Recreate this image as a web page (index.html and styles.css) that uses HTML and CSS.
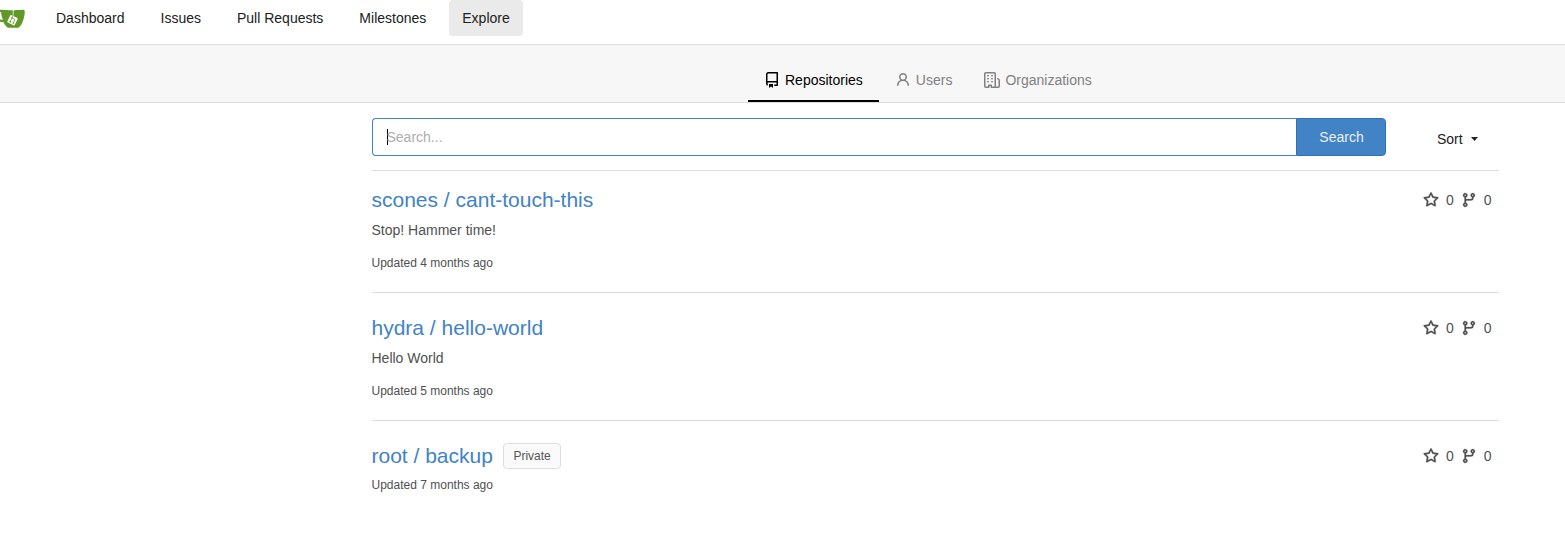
FILE: index.html
```html
<!DOCTYPE html>
<html lang="en">
<head>
<meta charset="utf-8">
<title>Explore</title>
<link rel="stylesheet" href="styles.css">
</head>
<body>
<svg class="sprite" aria-hidden="true">
  <symbol id="star" viewBox="0 0 16 16"><path fill-rule="evenodd" d="M8 .25a.75.75 0 0 1 .673.418l1.882 3.815 4.21.612a.75.75 0 0 1 .416 1.279l-3.046 2.97.719 4.192a.75.75 0 0 1-1.088.791L8 12.347l-3.766 1.98a.75.75 0 0 1-1.088-.79l.72-4.194L.818 6.374a.75.75 0 0 1 .416-1.28l4.21-.611L7.327.668A.75.75 0 0 1 8 .25zm0 2.445L6.615 5.5a.75.75 0 0 1-.564.41l-3.097.45 2.24 2.184a.75.75 0 0 1 .216.664l-.528 3.084 2.769-1.456a.75.75 0 0 1 .698 0l2.77 1.456-.53-3.084a.75.75 0 0 1 .216-.664l2.24-2.183-3.096-.45a.75.75 0 0 1-.564-.41L8 2.694z"/></symbol>
  <symbol id="branch" viewBox="0 0 16 16"><path fill-rule="evenodd" d="M11.75 2.5a.75.75 0 1 0 0 1.5.75.75 0 0 0 0-1.5zm-2.25.75a2.25 2.25 0 1 1 3 2.122V6A2.5 2.5 0 0 1 10 8.5H6a1 1 0 0 0-1 1v1.128a2.251 2.251 0 1 1-1.5 0V5.372a2.25 2.25 0 1 1 1.5 0v1.836A2.492 2.492 0 0 1 6 7h4a1 1 0 0 0 1-1v-.628A2.25 2.25 0 0 1 9.5 3.25zM4.25 12a.75.75 0 1 0 0 1.5.75.75 0 0 0 0-1.5zM3.5 3.25a.75.75 0 1 1 1.5 0 .75.75 0 0 1-1.5 0z"/></symbol>
</svg>
<nav class="navbar">
  <svg class="logo" viewBox="0 0 640 640"><path fill="#fff" d="m395.9 484.2-126.9-61c-12.5-6-17.9-21.2-11.8-33.8l61-126.9c6-12.5 21.2-17.9 33.8-11.8 17.2 8.3 27.1 13 27.1 13l-.1-109.2 16.7-.1.1 117.1s57.4 24.2 83.1 40.1c3.7 2.3 10.2 6.8 12.9 14.4 2.1 6.1 2 13.1-1 19.3l-61 126.9c-6.2 12.7-21.4 18.1-33.9 12z"/><path fill="#609926" d="M622.7 149.8c-4.1-4.1-9.6-4-9.6-4s-117.2 6.6-177.9 8c-13.3.3-26.5.6-39.6.7v117.2c-5.5-2.6-11.1-5.3-16.6-7.9 0-36.4-.1-109.2-.1-109.2-29 .4-89.2-2.2-89.2-2.2s-141.4-7.1-156.8-8.5c-9.8-.6-22.5-2.1-39 1.5-8.7 1.8-33.5 7.4-53.8 26.9C-4.9 212.4 6.6 276.2 8 285.8c1.7 11.7 6.9 44.2 31.7 72.5 45.8 56.1 144.4 54.8 144.4 54.8s12.1 28.9 30.6 55.5c25 33.1 50.7 58.9 75.7 62 63 0 188.9-.1 188.9-.1s12 .1 28.3-10.3c14-8.5 26.5-23.4 26.5-23.4S547 483 565 451.5c5.5-9.7 10.1-19.1 14.1-28 0 0 55.2-117.1 55.2-231.1-1.1-34.5-9.6-40.6-11.6-42.6zM125.6 353.9c-25.9-8.5-36.9-18.7-36.9-18.7S69.6 321.8 60 295.4c-16.5-44.2-1.4-71.2-1.4-71.2s8.4-22.5 38.5-30c13.8-3.7 31-3.1 31-3.1s7.1 59.4 15.7 94.2c7.2 29.2 24.8 77.7 24.8 77.7s-26.1-3.1-43-9.1zm300.3 107.6s-6.1 14.5-19.6 15.4c-5.8.4-10.3-1.2-10.3-1.2s-.3-.1-5.3-2.1l-112.9-55s-10.9-5.7-12.8-15.6c-2.2-8.1 2.7-18.1 2.7-18.1L322 273s4.8-9.7 12.2-13c.6-.3 2.3-1 4.5-1.5 8.1-2.1 18 2.8 18 2.8l110.7 53.7s12.6 5.7 15.3 16.2c1.9 7.4-.5 14-1.8 17.2-6.3 15.4-55 113.1-55 113.1z"/><path fill="#609926" d="M326.8 380.1c-8.2.1-15.4 5.8-17.3 13.8-1.9 8 2 16.3 9.1 20 7.7 4 17.5 1.8 22.7-5.4 5.1-7.1 4.3-16.9-1.8-23.1l24-49.1c1.5.1 3.7.2 6.2-.5 4.1-.9 7.1-3.6 7.1-3.6 4.2 1.8 8.6 3.8 13.2 6.1 4.8 2.4 9.3 4.9 13.4 7.3.9.5 1.8 1.1 2.8 1.9 1.6 1.3 3.4 3.1 4.7 5.5 1.9 5.5-1.9 14.9-1.9 14.9-2.3 7.6-18.4 40.6-18.4 40.6-8.1-.2-15.3 5-17.7 12.5-2.6 8.1 1.1 17.3 8.9 21.3 7.8 4 17.4 1.7 22.5-5.3 5-6.8 4.6-16.3-1.1-22.6 1.9-3.7 3.7-7.4 5.6-11.3 5-10.4 13.5-30.4 13.5-30.4.9-1.7 5.7-10.3 2.7-21.3-2.5-11.4-12.6-16.7-12.6-16.7-12.2-7.9-29.2-15.2-29.2-15.2s0-4.1-1.1-7.1c-1.1-3.1-2.8-5.1-3.9-6.3 4.7-9.7 9.4-19.3 14.1-29-4.1-2-8.1-4-12.2-6.1-4.8 9.8-9.7 19.7-14.5 29.5-6.7-.1-12.9 3.5-16.1 9.4-3.4 6.3-2.7 14.1 1.9 19.8z"/></svg>
  <a class="nav-item">Dashboard</a>
  <a class="nav-item">Issues</a>
  <a class="nav-item">Pull Requests</a>
  <a class="nav-item">Milestones</a>
  <a class="nav-item active">Explore</a>
</nav>
<div class="tabs">
  <a class="tab active"><svg class="icon" viewBox="0 0 16 16"><path fill-rule="evenodd" d="M2 2.5A2.5 2.5 0 0 1 4.5 0h8.75a.75.75 0 0 1 .75.75v12.5a.75.75 0 0 1-.75.75h-2.5a.75.75 0 1 1 0-1.5h1.75v-2h-8a1 1 0 0 0-.714 1.7.75.75 0 0 1-1.072 1.05A2.495 2.495 0 0 1 2 11.5v-9zm10.5-1V9h-8c-.356 0-.694.074-1 .208V2.5a1 1 0 0 1 1-1h8zM5 12.25v3.25a.25.25 0 0 0 .4.2l1.45-1.087a.25.25 0 0 1 .3 0L8.6 15.7a.25.25 0 0 0 .4-.2v-3.25a.25.25 0 0 0-.25-.25h-3.5a.25.25 0 0 0-.25.25z"/></svg>Repositories</a>
  <a class="tab"><svg class="icon" viewBox="0 0 16 16"><path fill-rule="evenodd" d="M10.5 5a2.5 2.5 0 1 1-5 0 2.5 2.5 0 0 1 5 0zm.061 3.073a4 4 0 1 0-5.123 0 6.004 6.004 0 0 0-3.431 5.142.75.75 0 0 0 1.498.07 4.5 4.5 0 0 1 8.99 0 .75.75 0 1 0 1.498-.07 6.005 6.005 0 0 0-3.432-5.142z"/></svg>Users</a>
  <a class="tab"><svg class="icon" viewBox="0 0 16 16"><path fill-rule="evenodd" d="M1.5 14.25c0 .138.112.25.25.25H4v-1.25a.75.75 0 0 1 .75-.75h2.5a.75.75 0 0 1 .75.75v1.25h2.25a.25.25 0 0 0 .25-.25V1.75a.25.25 0 0 0-.25-.25h-8.5a.25.25 0 0 0-.25.25v12.5zM1.75 16A1.75 1.75 0 0 1 0 14.25V1.75C0 .784.784 0 1.75 0h8.5C11.216 0 12 .784 12 1.75v12.5c0 .085-.006.168-.018.25h2.268a.25.25 0 0 0 .25-.25V8.285a.25.25 0 0 0-.111-.208l-1.055-.703a.75.75 0 1 1 .832-1.248l1.055.703c.487.325.779.871.779 1.456v5.965A1.75 1.75 0 0 1 14.25 16h-3.5a.75.75 0 0 1-.197-.026c-.099.017-.2.026-.303.026h-3a.75.75 0 0 1-.75-.75V14h-1v1.25a.75.75 0 0 1-.75.75h-3zM3 3.75A.75.75 0 0 1 3.75 3h.5a.75.75 0 0 1 0 1.5h-.5A.75.75 0 0 1 3 3.75zM3.75 6a.75.75 0 0 0 0 1.5h.5a.75.75 0 0 0 0-1.5h-.5zM3 9.75A.75.75 0 0 1 3.75 9h.5a.75.75 0 0 1 0 1.5h-.5A.75.75 0 0 1 3 9.75zM7.75 9a.75.75 0 0 0 0 1.5h.5a.75.75 0 0 0 0-1.5h-.5zM7 6.75A.75.75 0 0 1 7.75 6h.5a.75.75 0 0 1 0 1.5h-.5A.75.75 0 0 1 7 6.75zM7.75 3a.75.75 0 0 0 0 1.5h.5a.75.75 0 0 0 0-1.5h-.5z"/></svg>Organizations</a>
</div>
<main class="content">
  <div class="toolbar">
    <div class="search-box"><span class="caret"></span>Search...</div>
    <button class="search-button">Search</button>
    <div class="sort">Sort <svg class="arrow" viewBox="0 0 7 4"><path d="M0 0h7L3.5 4z"/></svg></div>
  </div>
  <section class="repo">
    <div class="repo-head"><a class="repo-name">scones / cant-touch-this</a>
      <div class="stats"><svg class="icon"><use href="#star"/></svg><span>0</span><svg class="icon"><use href="#branch"/></svg><span>0</span></div></div>
    <p class="desc">Stop! Hammer time!</p>
    <p class="updated">Updated 4 months ago</p>
  </section>
  <section class="repo">
    <div class="repo-head"><a class="repo-name">hydra / hello-world</a>
      <div class="stats"><svg class="icon"><use href="#star"/></svg><span>0</span><svg class="icon"><use href="#branch"/></svg><span>0</span></div></div>
    <p class="desc">Hello World</p>
    <p class="updated">Updated 5 months ago</p>
  </section>
  <section class="repo">
    <div class="repo-head"><a class="repo-name">root / backup</a><span class="label">Private</span>
      <div class="stats"><svg class="icon"><use href="#star"/></svg><span>0</span><svg class="icon"><use href="#branch"/></svg><span>0</span></div></div>
    <p class="updated">Updated 7 months ago</p>
  </section>
</main>
</body>
</html>
```
FILE: styles.css
```css
* { box-sizing: border-box; }
body {
  margin: 0;
  background: #fff;
  color: #212121;
  font: 14px/20px "Liberation Sans", Arial, sans-serif;
  overflow: hidden;
}
.sprite { display: none; }
.icon { width: 16px; height: 16px; fill: currentColor; flex: none; }
.stats .icon { stroke: currentColor; stroke-width: .25; }

.navbar {
  display: flex;
  align-items: flex-start;
  gap: 10px;
  height: 45px;
  border-bottom: 1px solid #dedede;
}
.logo { width: 30px; height: 30px; margin: 3px 8px 0 -5px; flex: none; }
.nav-item { height: 36px; padding: 8px 13px; border-radius: 4px; white-space: nowrap; }
.nav-item.active { background: #eaeaea; }

.tabs {
  display: flex;
  align-items: flex-end;
  height: 58px;
  padding-left: 748px;
  background: #f7f7f7;
  border-bottom: 1px solid #dcdcdc;
}
.tab {
  display: flex;
  align-items: center;
  gap: 5px;
  height: 44px;
  padding: 2px 16px 0;
  border-bottom: 2px solid transparent;
  color: #818181;
}
.tab.active { color: #000; border-color: #000; }

.content { width: 1127px; margin-left: 371.5px; padding-top: 15px; }
.toolbar { display: flex; height: 53px; border-bottom: 1px solid #dcdcdc; }
.search-box {
  display: flex;
  align-items: center;
  width: 924.5px;
  height: 38px;
  padding-left: 14px;
  border: 1px solid #4183c4;
  border-right: 0;
  border-radius: 4px 0 0 4px;
  color: #adadad;
}
.caret { width: 1px; height: 16px; margin-right: -1px; background: #000; }
.search-button {
  width: 90px;
  height: 38px;
  padding: 0 0 0 1px;
  border: 1px solid #2f73b7;
  border-radius: 0 4px 4px 0;
  background: #4183c4;
  color: #e9f0f8;
  font: inherit;
}
.sort { display: flex; align-items: center; gap: 8px; height: 42px; margin-left: 51px; }
.arrow { width: 7px; height: 4px; fill: #212121; }

.repo { height: 128px; padding-top: 22px; border-bottom: 1px solid #dcdcdc; }
.toolbar + .repo { height: 122px; padding-top: 16px; }
.repo:last-child { border-bottom: 0; }
.repo-head { display: flex; align-items: center; height: 26px; }
.repo-name { color: #4183c4; font-size: 21px; line-height: 26px; }
.label {
  height: 26px;
  margin-left: 10px;
  padding: 0 9.5px;
  border: 1px solid #dedede;
  border-radius: 4px;
  background: #fafafa;
  color: #555;
  font-size: 12px;
  line-height: 24px;
}
.stats { display: flex; align-items: center; gap: 7px; margin-left: auto; padding-right: 7px; color: #505050; }
.desc { margin: 7px 0 0; color: #505050; }
.updated { margin: 13px 0 0; color: #505050; font-size: 12px; }
.repo-head + .updated { margin-top: 6px; }
```
